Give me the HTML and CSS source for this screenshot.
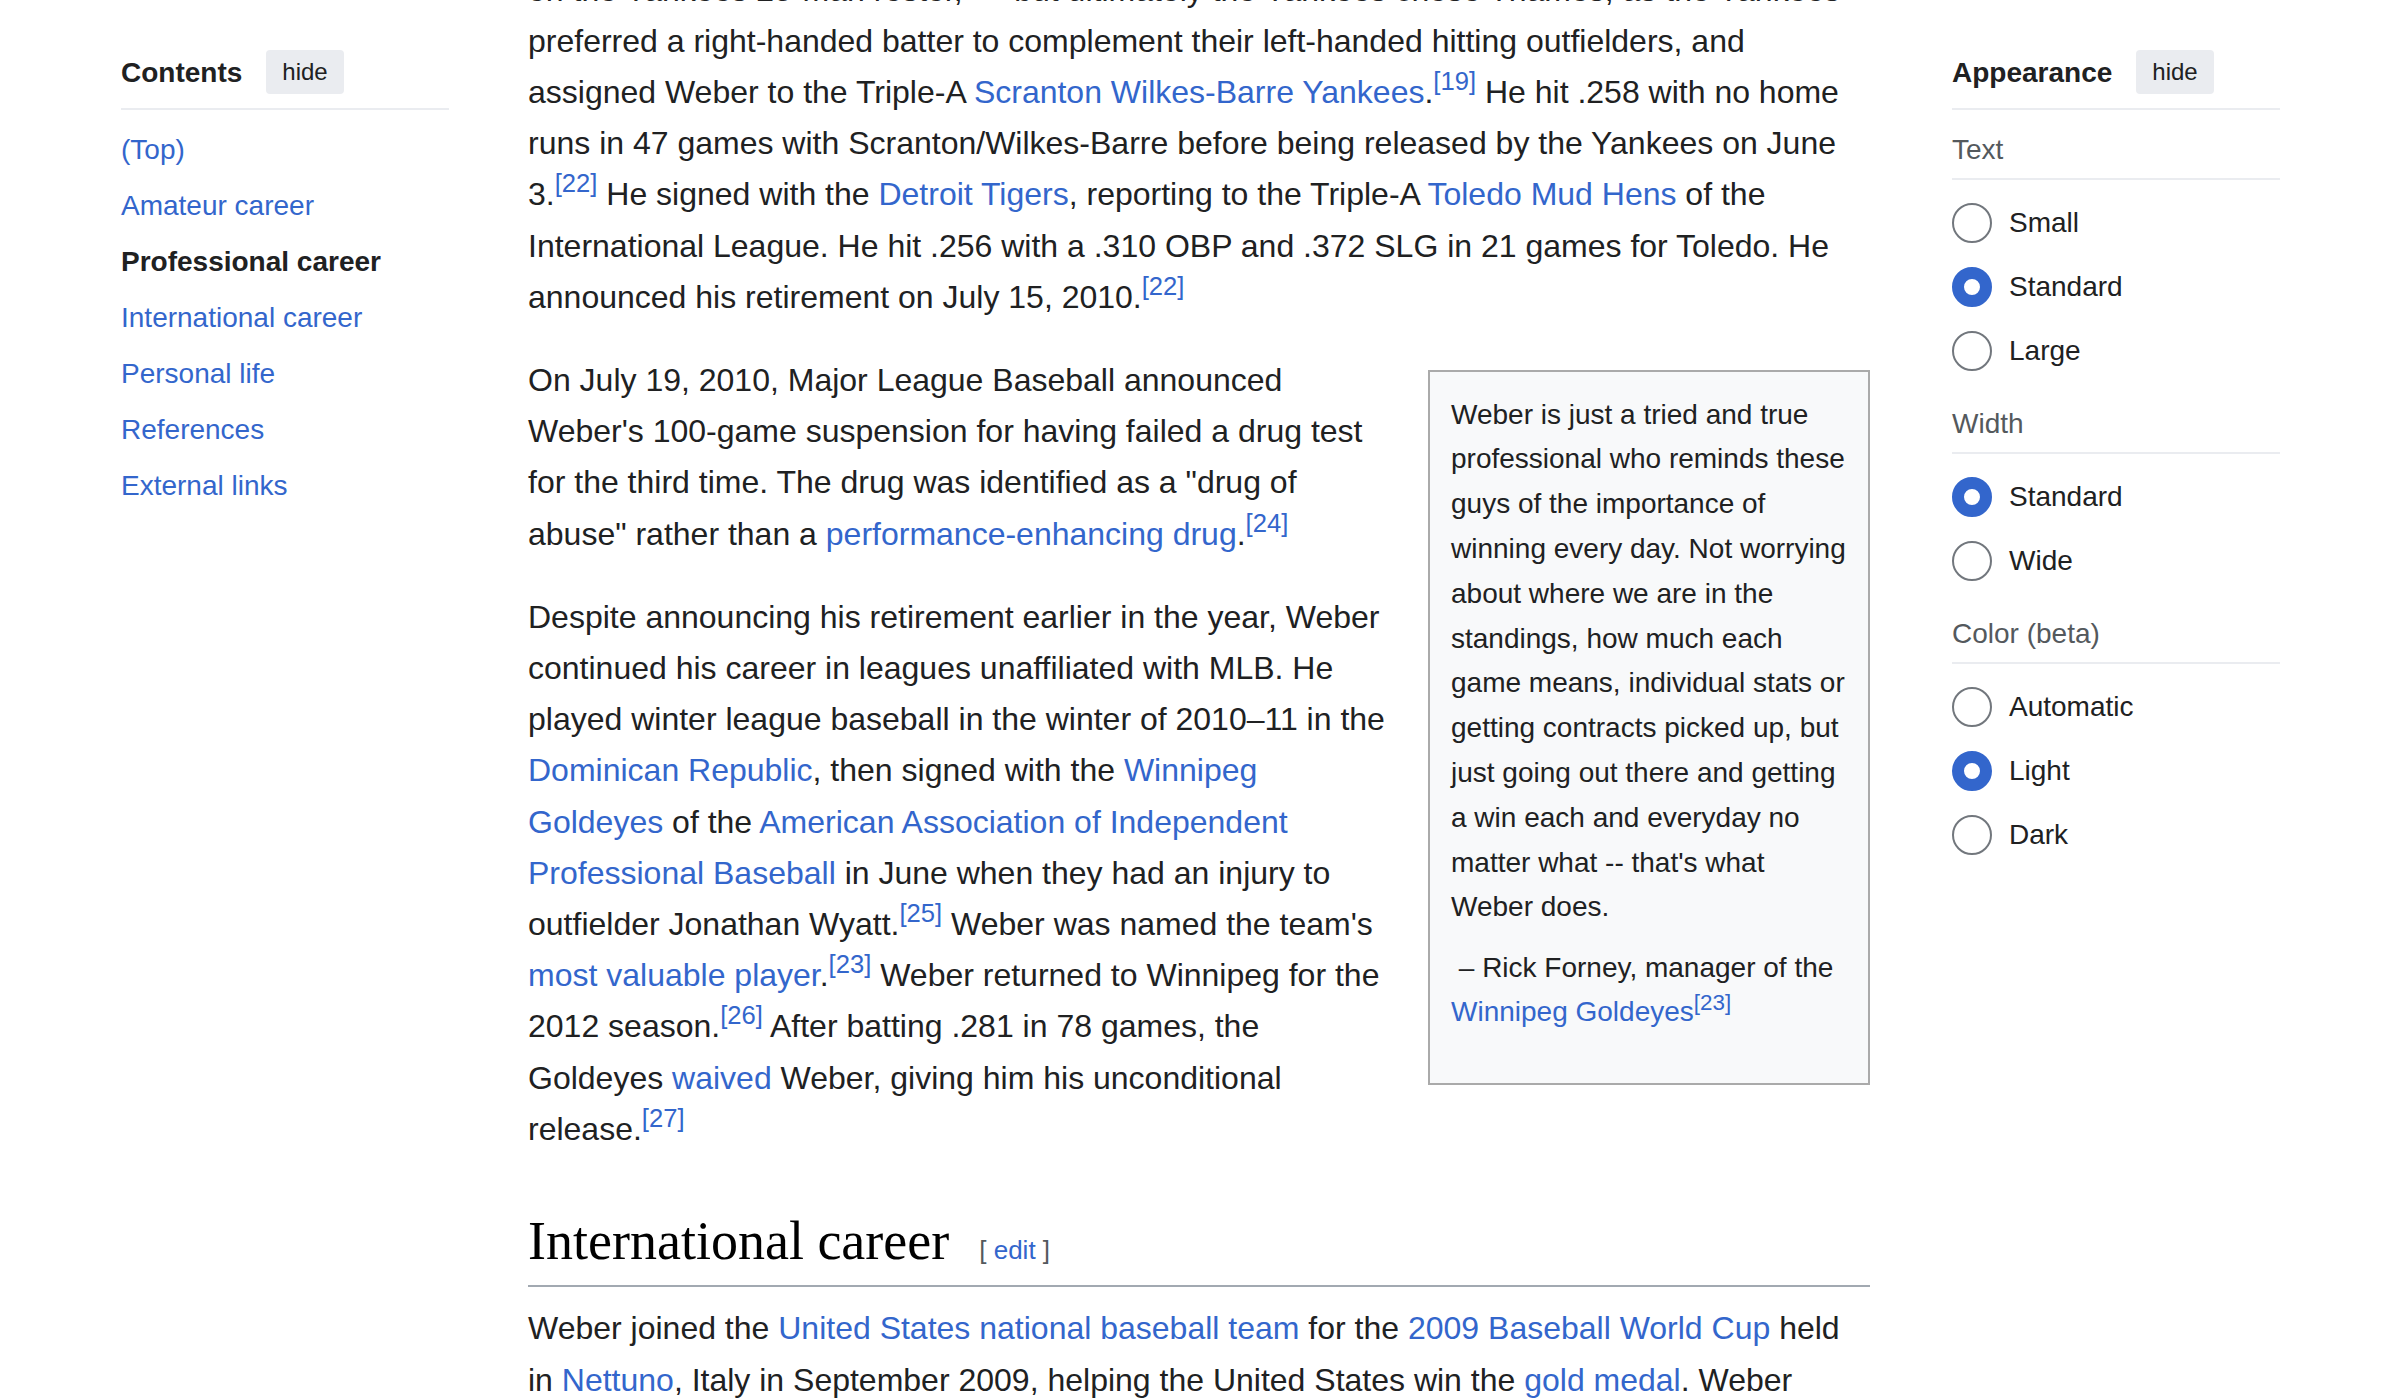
FILE: index.html
```html
<!DOCTYPE html>
<html lang="en">
<head>
<meta charset="utf-8">
<title>Weber – Professional career</title>
<link rel="stylesheet" href="styles.css">
</head>
<body>
<div class="page">
  <nav class="toc">
    <div class="panel-head">
      <div class="panel-title">Contents</div>
      <button class="hide-btn" type="button">hide</button>
    </div>
    <ul class="toc-list">
      <li><a href="#">(Top)</a></li>
      <li><a href="#">Amateur career</a></li>
      <li class="active">Professional career</li>
      <li><a href="#">International career</a></li>
      <li><a href="#">Personal life</a></li>
      <li><a href="#">References</a></li>
      <li><a href="#">External links</a></li>
    </ul>
  </nav>

  <main class="content">
    <div class="para para-first">on the Yankees 25-man roster,<sup class="ref">[18]</sup> but ultimately the Yankees chose Thames, as the Yankees preferred a right-handed batter to complement their left-handed hitting outfielders, and assigned Weber to the Triple-A <a href="#">Scranton Wilkes-Barre Yankees</a>.<sup class="ref"><a href="#">[19]</a></sup> He hit .258 with no home runs in 47 games with Scranton/Wilkes-Barre before being released by the Yankees on June 3.<sup class="ref"><a href="#">[22]</a></sup> He signed with the <a href="#">Detroit Tigers</a>, reporting to the Triple-A <a href="#">Toledo Mud Hens</a> of the International League. He hit .256 with a .310 OBP and .372 SLG in 21 games for Toledo. He announced his retirement on July 15, 2010.<sup class="ref"><a href="#">[22]</a></sup></div>

    <div class="para">
      <div class="quotebox">
        <div class="quote-text">Weber is just a tried and true professional who reminds these guys of the importance of winning every day. Not worrying about where we are in the standings, how much each game means, individual stats or getting contracts picked up, but just going out there and getting a win each and everyday no matter what -- that's what Weber does.</div>
        <div class="quote-cite">&nbsp;– Rick Forney, manager of the <a href="#">Winnipeg Goldeyes</a><sup class="ref"><a href="#">[23]</a></sup></div>
      </div>
      On July 19, 2010, Major League Baseball announced Weber's 100-game suspension for having failed a drug test for the third time. The drug was identified as a "drug of abuse" rather than a <a href="#">performance-enhancing drug</a>.<sup class="ref"><a href="#">[24]</a></sup>
    </div>

    <div class="para">Despite announcing his retirement earlier in the year, Weber continued his career in leagues unaffiliated with MLB. He played winter league baseball in the winter of 2010–11 in the <a href="#">Dominican Republic</a>, then signed with the <a href="#">Winnipeg Goldeyes</a> of the <a href="#">American Association of Independent Professional Baseball</a> in June when they had an injury to outfielder Jonathan Wyatt.<sup class="ref"><a href="#">[25]</a></sup> Weber was named the team's <a href="#">most valuable player</a>.<sup class="ref"><a href="#">[23]</a></sup> Weber returned to Winnipeg for the 2012 season.<sup class="ref"><a href="#">[26]</a></sup> After batting .281 in 78 games, the Goldeyes <a href="#">waived</a> Weber, giving him his unconditional release.<sup class="ref"><a href="#">[27]</a></sup></div>

    <h2 class="section-heading">International career<span class="editsection"><span class="bracket">[</span> <a href="#">edit</a> <span class="bracket">]</span></span></h2>

    <div class="para para-after-heading">Weber joined the <a href="#">United States national baseball team</a> for the <a href="#">2009 Baseball World Cup</a> held in <a href="#">Nettuno</a>, Italy in September 2009, helping the United States win the <a href="#">gold medal</a>. Weber appeared in the tournament as a member of the team's pitching staff.</div>
  </main>

  <aside class="appearance">
    <div class="panel-head">
      <div class="panel-title">Appearance</div>
      <button class="hide-btn" type="button">hide</button>
    </div>

    <div class="opt-label opt-label-first">Text</div>
    <ul class="radio-list">
      <li class="radio-row"><span class="radio"></span><span class="radio-text">Small</span></li>
      <li class="radio-row"><span class="radio checked"></span><span class="radio-text">Standard</span></li>
      <li class="radio-row"><span class="radio"></span><span class="radio-text">Large</span></li>
    </ul>

    <div class="opt-label">Width</div>
    <ul class="radio-list">
      <li class="radio-row"><span class="radio checked"></span><span class="radio-text">Standard</span></li>
      <li class="radio-row"><span class="radio"></span><span class="radio-text">Wide</span></li>
    </ul>

    <div class="opt-label">Color (beta)</div>
    <ul class="radio-list">
      <li class="radio-row"><span class="radio"></span><span class="radio-text">Automatic</span></li>
      <li class="radio-row"><span class="radio checked"></span><span class="radio-text">Light</span></li>
      <li class="radio-row"><span class="radio"></span><span class="radio-text">Dark</span></li>
    </ul>
  </aside>
</div>
</body>
</html>
```

FILE: styles.css
```css
* {
  box-sizing: border-box;
}

html, body {
  margin: 0;
  padding: 0;
  background: #ffffff;
}

body {
  height: 1398px;
  overflow: hidden;
  font-family: "Liberation Sans", Arial, Helvetica, sans-serif;
  color: #202122;
}

a {
  color: #3366cc;
  text-decoration: none;
}

ul {
  list-style: none;
  margin: 0;
  padding: 0;
}

.page {
  display: flex;
  align-items: flex-start;
}

/* ---------- side panels ---------- */

.toc {
  width: 328px;
  margin-left: 121px;
  padding-top: 50px;
  flex: none;
}

.appearance {
  width: 328px;
  margin-left: 82px;
  padding-top: 50px;
  flex: none;
}

.panel-head {
  display: flex;
  align-items: center;
  box-sizing: content-box;
  height: 44px;
  padding-bottom: 14px;
  border-bottom: 2px solid #eaecf0;
}

.panel-title {
  font-size: 28px;
  font-weight: bold;
  padding-top: 1px;
}

.hide-btn {
  margin-left: 24px;
  height: 44px;
  padding: 0 16px;
  border: 0;
  border-radius: 4px;
  background: #eaecf0;
  color: #202122;
  font-family: inherit;
  font-size: 24px;
}

.toc-list {
  margin-top: 11.5px;
}

.toc-list li {
  height: 56px;
  line-height: 56px;
  font-size: 28px;
  white-space: nowrap;
}

.toc-list li.active {
  font-weight: bold;
}

.opt-label {
  margin-top: 18.8px;
  font-size: 28px;
  line-height: 44.8px;
  color: #54595d;
  padding-bottom: 5.5px;
  border-bottom: 2px solid #eaecf0;
}

.opt-label-first {
  margin-top: 18px;
}

.radio-list {
  margin-top: 11px;
}

.radio-row {
  display: flex;
  align-items: center;
  height: 64px;
}

.radio {
  width: 40px;
  height: 40px;
  border-radius: 50%;
  border: 2px solid #72777d;
  background: #ffffff;
  flex: none;
}

.radio.checked {
  border: 12px solid #3366cc;
}

.radio-text {
  margin-left: 17px;
  font-size: 28px;
}

/* ---------- article ---------- */

.content {
  width: 1342px;
  margin-left: 79px;
  flex: none;
  font-size: 32px;
  line-height: 51.2px;
}

.para {
  margin: 32px 0;
}

.para-first {
  margin-top: -35.4px;
}

.ref {
  font-size: 80%;
  line-height: 1;
  vertical-align: 0.5em;
}

.quotebox {
  float: right;
  width: 442px;
  margin: 14.5px 0 22px 40px;
  padding: 21px 15px 48px 21px;
  border: 2px solid #aaaaaa;
  background: #f8f9fa;
  font-size: 28px;
  line-height: 44.8px;
}

.quote-text {
  padding-bottom: 1.5px;
}

.quote-cite {
  margin-top: 14px;
}

.section-heading {
  margin: 50.7px 0 0 0;
  padding-bottom: 9.5px;
  border-bottom: 2px solid #a2a9b1;
  font-family: "Liberation Serif", "Times New Roman", serif;
  font-weight: normal;
  font-size: 54px;
  line-height: 70.2px;
  color: #000000;
}

.editsection {
  margin-left: 30px;
  font-family: "Liberation Sans", Arial, sans-serif;
  font-size: 26px;
  line-height: 1;
  color: #54595d;
}

.para-after-heading {
  margin-top: 16px;
}
```
